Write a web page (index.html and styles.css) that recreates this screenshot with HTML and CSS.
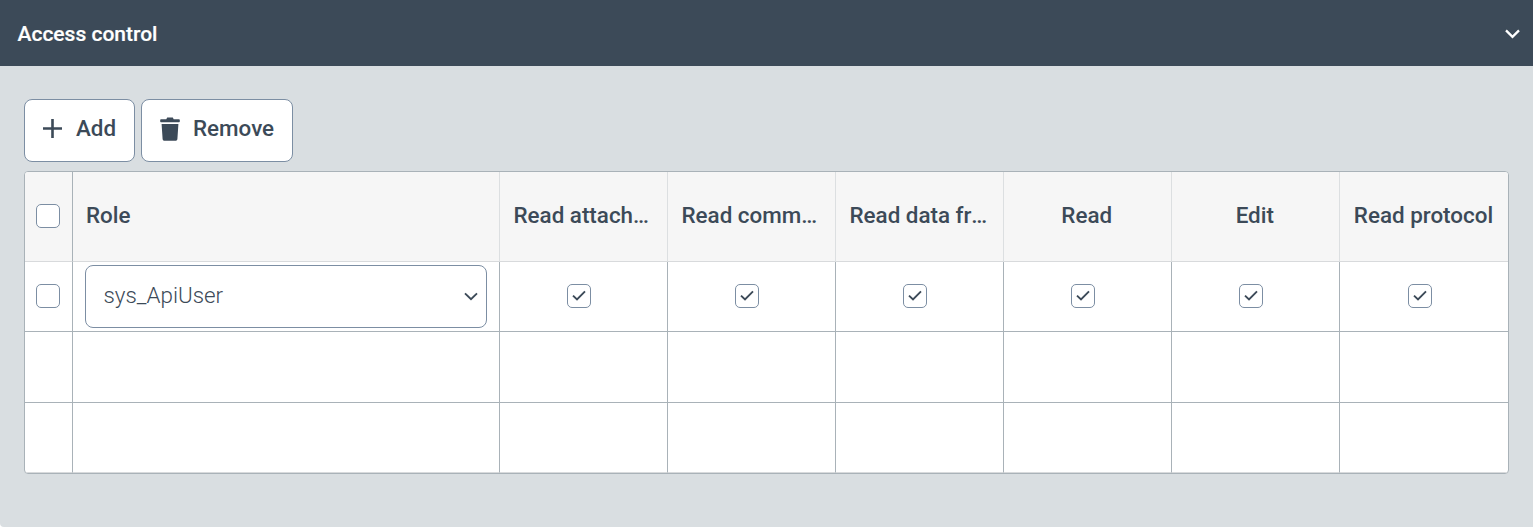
FILE: index.html
```html
<!DOCTYPE html>
<html lang="en">
<head>
<meta charset="utf-8">
<title>Access control</title>
<link rel="stylesheet" href="styles.css">
</head>
<body>
<section class="panel">
  <header class="panel-head">
    <h2 class="panel-title">Access control</h2>
    <svg class="panel-chevron" width="15" height="10" viewBox="0 0 15 10"><path d="M1 1.4 7.5 7.8 14 1.4" fill="none" stroke="#fff" stroke-width="2.3"/></svg>
  </header>
  <div class="panel-body">
    <div class="toolbar">
      <button class="btn btn-add" type="button">
        <svg class="btn-icon" width="19" height="19" viewBox="0 0 19 19"><path d="M9.5 0v19M0 9.5h19" fill="none" stroke="#3c4a58" stroke-width="2.6"/></svg>
        Add
      </button>
      <button class="btn btn-remove" type="button">
        <svg class="btn-icon" width="20" height="24" viewBox="0 0 20 24"><path d="M7.2 0.6h5.6l.9 1.6H19c.5 0 .8.4.8.8v1.6c0 .4-.3.7-.8.7H1c-.5 0-.8-.3-.8-.7V3c0-.4.3-.8.8-.8h5.3zM1.6 7h16.8l-1 15c-.1 1-.9 1.8-1.9 1.8H4.5c-1 0-1.8-.8-1.9-1.8z" fill="#3c4a58"/></svg>
        Remove
      </button>
    </div>
    <div class="grid-wrap">
      <table class="grid">
        <colgroup>
          <col class="c-check"><col class="c-role"><col class="c-perm"><col class="c-perm"><col class="c-perm"><col class="c-perm"><col class="c-perm"><col class="c-perm">
        </colgroup>
        <thead>
          <tr>
            <th class="cell-check"><span class="box"></span></th>
            <th class="th-role">Role</th>
            <th><span class="th-label">Read attachments</span></th>
            <th><span class="th-label">Read comments</span></th>
            <th><span class="th-label">Read data from</span></th>
            <th><span class="th-label">Read</span></th>
            <th><span class="th-label">Edit</span></th>
            <th><span class="th-label th-label-last">Read protocol</span></th>
          </tr>
        </thead>
        <tbody>
          <tr class="row-a">
            <td class="cell-check"><span class="box"></span></td>
            <td class="cell-role">
              <div class="select">
                <span class="select-value">sys_ApiUser</span>
                <svg width="14" height="9" viewBox="0 0 14 9"><path d="M1 1.4 7 7.2l6-5.8" fill="none" stroke="#3c4a58" stroke-width="1.9"/></svg>
              </div>
            </td>
            <td class="cell-perm"><span class="box"><svg width="14" height="11" viewBox="0 0 14 11"><path d="M1 5.6 5 9.4 13 1.4" fill="none" stroke="#3c4a58" stroke-width="1.9"/></svg></span></td>
            <td class="cell-perm"><span class="box"><svg width="14" height="11" viewBox="0 0 14 11"><path d="M1 5.6 5 9.4 13 1.4" fill="none" stroke="#3c4a58" stroke-width="1.9"/></svg></span></td>
            <td class="cell-perm"><span class="box"><svg width="14" height="11" viewBox="0 0 14 11"><path d="M1 5.6 5 9.4 13 1.4" fill="none" stroke="#3c4a58" stroke-width="1.9"/></svg></span></td>
            <td class="cell-perm"><span class="box"><svg width="14" height="11" viewBox="0 0 14 11"><path d="M1 5.6 5 9.4 13 1.4" fill="none" stroke="#3c4a58" stroke-width="1.9"/></svg></span></td>
            <td class="cell-perm"><span class="box"><svg width="14" height="11" viewBox="0 0 14 11"><path d="M1 5.6 5 9.4 13 1.4" fill="none" stroke="#3c4a58" stroke-width="1.9"/></svg></span></td>
            <td class="cell-perm"><span class="box"><svg width="14" height="11" viewBox="0 0 14 11"><path d="M1 5.6 5 9.4 13 1.4" fill="none" stroke="#3c4a58" stroke-width="1.9"/></svg></span></td>
          </tr>
          <tr class="row-b"><td></td><td></td><td></td><td></td><td></td><td></td><td></td><td></td></tr>
          <tr class="row-c"><td></td><td></td><td></td><td></td><td></td><td></td><td></td><td></td></tr>
        </tbody>
      </table>
    </div>
  </div>
</section>
</body>
</html>
```

FILE: styles.css
```css
* { box-sizing: border-box; }
html, body { margin: 0; padding: 0; background: #fff; }
body { font-family: Roboto, "Liberation Sans", sans-serif; color: #3c4a58; overflow: hidden; }

.panel {
  width: 1533px;
  height: 527px;
  background: #d9dee1;
  border-bottom-left-radius: 4px;
}
.panel-head {
  height: 66px;
  background: #3c4a58;
  display: flex;
  align-items: center;
  justify-content: space-between;
  padding: 2px 13px 0 17.5px;
}
.panel-title { margin: 0; font-size: 21px; font-weight: 500; color: #fff; line-height: 1; -webkit-text-stroke: 0.2px #fff; }
.panel-chevron { display: block; }

.panel-body { padding: 33px 24px 0; }
.toolbar { display: flex; gap: 6px; margin-bottom: 9px; }
.btn {
  height: 63px;
  background: #fff;
  border: 1px solid #7c8ea3;
  border-radius: 8px;
  display: flex;
  align-items: center;
  font-family: inherit;
  font-size: 22.4px;
  font-weight: 500;
  color: #3c4a58;
  padding: 0 0 6px;
}
.btn-add { width: 111px; padding-left: 18px; gap: 14px; }
.btn-remove { width: 152px; padding-left: 18px; gap: 13px; }
.btn-icon { display: block; flex: none; margin-top: 2px; }

.grid-wrap {
  width: 1485px;
  border: 1px solid #a9b2b8;
  border-radius: 4px;
  overflow: hidden;
  background: #fff;
}
.grid { border-collapse: separate; border-spacing: 0; table-layout: fixed; width: 1483px; }
.c-check { width: 48px; }
.c-role { width: 427px; }
.c-perm { width: 168px; }

.grid th, .grid td { padding: 0; border-right: 1px solid #a9b2b8; border-bottom: 1px solid #a9b2b8; }
.grid th:last-child, .grid td:last-child { border-right: 0; }
.grid thead tr { height: 90px; }
.grid th {
  background: #f6f6f6;
  font-size: 22.4px;
  font-weight: 500;
  color: #3c4a58;
  text-align: center;
  border-right-color: #dcdfe1;
  border-bottom-color: #d8dadc;
  padding-bottom: 4px;
}
.grid th:first-child { border-right-color: #a9b2b8; }
.th-label {
  display: block;
  padding: 0 15px 0 13.5px;
  white-space: nowrap;
  overflow: hidden;
  text-overflow: ellipsis;
}
.th-label-last { padding: 0 14px 0 13px; }
.grid th.th-role { text-align: left; padding-left: 13px; }
.row-a { height: 70px; }
.row-b { height: 71px; }
.row-c { height: 70px; }
.row-c td { border-bottom-color: #d8dadc; }

.cell-check { text-align: center; vertical-align: middle; padding-right: 1px !important; }
.row-a .cell-check, .row-a .cell-perm { padding-bottom: 2px; }
.cell-perm { text-align: center; vertical-align: middle; padding-right: 9px !important; }
.box {
  display: inline-flex;
  align-items: center;
  justify-content: center;
  width: 24px;
  height: 24px;
  vertical-align: middle;
  background: #fff;
  border: 1px solid #7c8ea3;
  border-radius: 5px;
}
.cell-role { padding: 0 12px !important; vertical-align: middle; }
.select {
  height: 63px;
  width: 402px;
  border: 1px solid #7c8ea3;
  border-radius: 8px;
  background: #fff;
  display: flex;
  align-items: center;
  justify-content: space-between;
  padding: 0 8px 0 17.5px;
  font-size: 22.4px;
  font-weight: 300;
  color: #3c4a58;
}
.select-value { margin-top: -4px; }
```
